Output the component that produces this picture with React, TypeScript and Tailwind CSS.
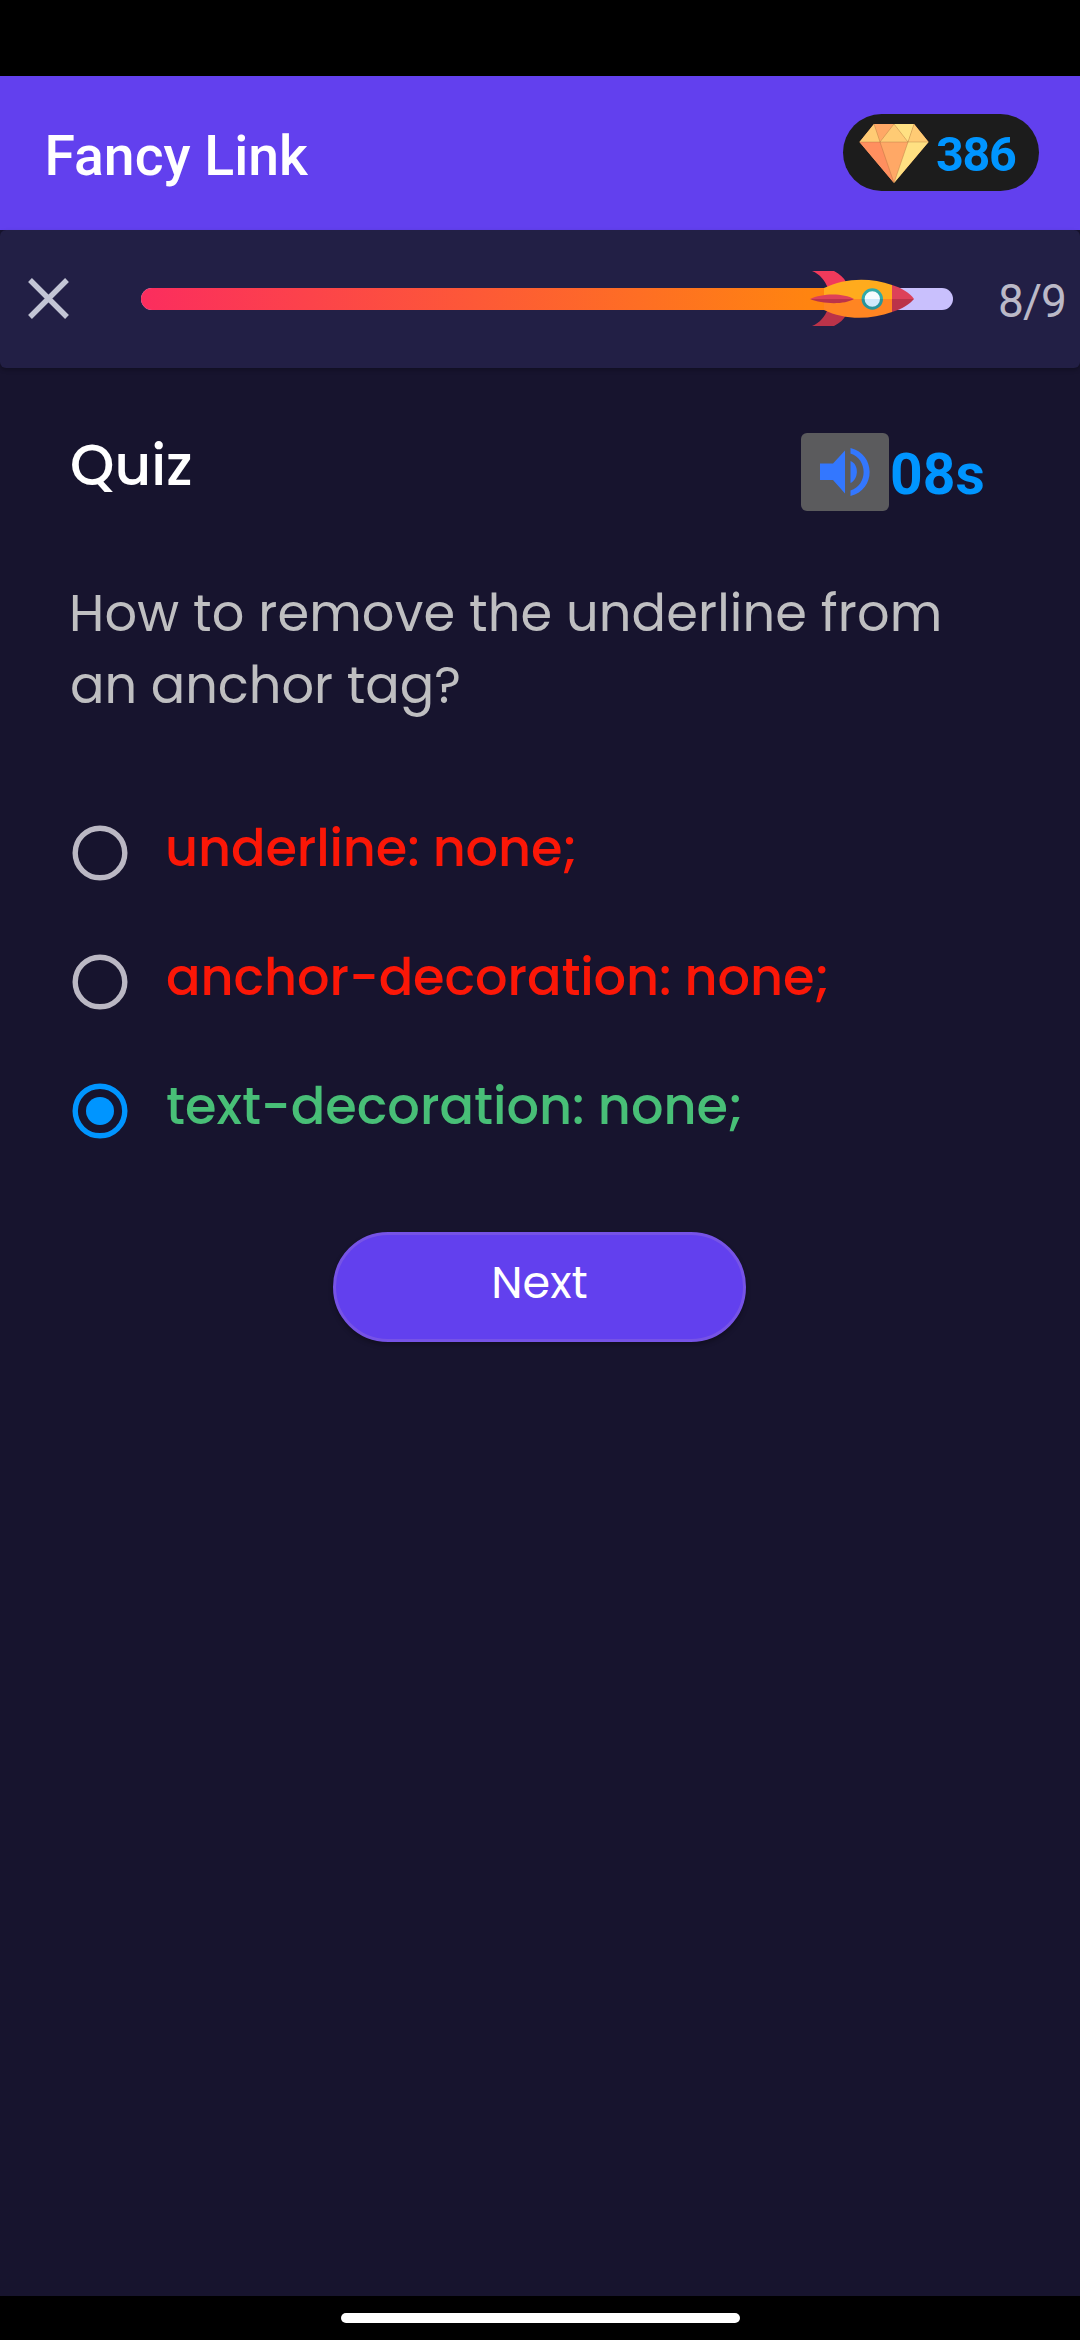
type Option = {
  label: string;
  selected: boolean;
  textClass: string;
};

const options: Option[] = [
  { label: "underline: none;", selected: false, textClass: "text-[#fb1707] tracking-[-0.13px]" },
  { label: "anchor-decoration: none;", selected: false, textClass: "ml-px text-[#fb1707] tracking-[-0.1px]" },
  { label: "text-decoration: none;", selected: true, textClass: "ml-px text-[#48bf77]" },
];

function Diamond() {
  return (
    <svg className="h-[60px] w-[70px]" viewBox="0 0 70 60" aria-hidden="true">
      <path d="M15 1H55L69.500 19L35 60L.5 19Z" fill="#ffa866" />
      <path d="M15 1L.5 19H21Z" fill="#ffcb74" />
      <path d="M35 1L21 19H49Z" fill="#ffcb74" />
      <path d="M35 1H55L49 19Z" fill="#ffe082" />
      <path d="M55 1L69.500 19H49Z" fill="#ffcb74" />
      <path d="M.5 19H21L35 60Z" fill="#ff8f5f" />
      <path d="M49 19H69.500L35 60Z" fill="#ffe082" />
      <path
        d="M.5 19H69.500M15 1L21 19L35 60L49 19L55 1M21 19L35 1L49 19"
        fill="none"
        stroke="#8a5a2c"
        strokeOpacity=".4"
        strokeWidth=".7"
      />
    </svg>
  );
}

function Rocket() {
  return (
    <svg className="h-[56px] w-[105px]" viewBox="0 0 105 56" aria-hidden="true">
      <path d="M2 0H24C30 3 34 7 36 11L18 17C15 10 10 3 2 0Z" fill="#f03a5b" />
      <path d="M2 55H24C30 52 34 48 36 44L18 38C15 45 10 52 2 55Z" fill="#bb3349" />
      <path d="M14 28V17C34 7 60 6 82 14V28Z" fill="#ffab1d" />
      <path d="M14 28V39C34 49 60 49 82 41V28Z" fill="#ff8522" />
      <path d="M82 14C92 17 100 22 104 28H82Z" fill="#dd4159" />
      <path d="M82 41C92 38 100 33 104 28H82Z" fill="#bb3349" />
      <path d="M0 28C12 22 34 22 44 28Z" fill="#dd4159" />
      <path d="M0 28C12 33 34 34 44 28Z" fill="#bb3349" />
      <circle cx="62.300" cy="27.800" r="9.200" fill="#f6fcff" />
      <path d="M53 28A9.300 9.300 0 0 0 71.600 28Z" fill="#cfe9fb" />
      <path d="M53.100 28A9.200 9.200 0 0 1 71.500 28" fill="none" stroke="#32aaa8" strokeWidth="3" />
      <path d="M53.100 28A9.200 9.200 0 0 0 71.500 28" fill="none" stroke="#27949b" strokeWidth="3" />
    </svg>
  );
}

function RadioMark({ selected }: { selected: boolean }) {
  return (
    <svg className="size-[56px] shrink-0" viewBox="0 0 56 56" aria-hidden="true">
      <circle cx="28" cy="28" r="24.800" fill="none" stroke={selected ? "#0095ff" : "#bbb8c4"} strokeWidth="5.400" />
      {selected && <circle cx="28" cy="28" r="14" fill="#0095ff" />}
    </svg>
  );
}

export default function App() {
  return (
    <div className="flex h-[2340px] w-[1080px] flex-col overflow-hidden bg-[#17142e] font-['Poppins','Inter',sans-serif]">
      <div className="h-[76px] shrink-0 bg-black" />

      <header className="flex h-[154px] shrink-0 items-center justify-between bg-[#6240ee] pr-[41px] pl-[44.500px] font-['Roboto',sans-serif]">
        <h1 className="pt-[7px] text-[55.300px] leading-[64px] font-medium text-white">Fancy Link</h1>
        <div className="mb-px flex h-[77px] w-[196px] items-center rounded-full bg-[#1c1c1c] pl-[15.500px]">
          <Diamond />
          <span className="pt-[5px] pl-[7.500px] text-[48.500px] leading-[56px] font-bold tracking-[-1.3px] text-[#0095ff]">
            386
          </span>
        </div>
      </header>

      <section className="flex h-[138px] shrink-0 items-center rounded-md bg-[#221f45] pl-[28px] shadow-[0_2px_4px_rgba(0,0,0,0.25)]">
        <svg className="mb-[2px] h-[41px] w-[41px]" viewBox="0 0 41 41" aria-hidden="true">
          <path d="M2 2L39 39M39 2L2 39" stroke="#c3c5d5" strokeWidth="5.400" />
        </svg>
        <div className="relative ml-[72px] h-[22px] w-[812px] rounded-full bg-[#c9c0fd]">
          <div className="h-full w-[725px] rounded-l-full bg-linear-to-r/srgb from-[#fb2d5e] to-[#ff8410] to-92%" />
          <div className="absolute top-[-17px] left-[669px]">
            <Rocket />
          </div>
        </div>
        <span className="ml-[45px] pt-[4px] font-['Roboto',sans-serif] text-[46px] leading-[54px] tracking-[-0.9px] text-[#bbb9c7]">
          8/9
        </span>
      </section>

      <main className="flex flex-1 flex-col px-[72px] pt-[65px]">
        <div className="flex h-[78px] items-center justify-between">
          <h2 className="-ml-[2px] pb-[12px] text-[56.500px] leading-[64px] font-medium text-white">Quiz</h2>
          <div className="mr-[24px] flex w-[183px] items-center">
            <div className="flex h-[78px] w-[88px] shrink-0 items-center justify-center rounded-md bg-[#5b5b5d]">
              <svg className="h-[50px] w-[52px]" viewBox="0 0 52 50" fill="#3377ff" aria-hidden="true">
                <path d="M1 16.500H14L26 3.500V46.500L14 33H1Z" />
                <path d="M31.500 14C40 17 40 32 31.500 36Z" />
                <path d="M31.500 1C57 7 57 43 31.500 49V43.500C49 38 49 12 31.500 6.500Z" />
              </svg>
            </div>
            <span className="pt-[5px] pl-px font-['Roboto',sans-serif] text-[57px] leading-[66px] font-bold text-[#0095ff]">
              08s
            </span>
          </div>
        </div>

        <p className="mt-[66px] -ml-[3px] flex flex-col items-start text-[51px] leading-[72px] whitespace-nowrap text-[#bfbfc1]">
          <span className="tracking-[0.15px]">How to remove the underline from</span>
          <span className="ml-px">an anchor tag?</span>
        </p>

        <div className="mt-[104px] flex flex-col gap-[73px]" role="radiogroup">
          {options.map((option) => (
            <div
              key={option.label}
              role="radio"
              aria-checked={option.selected}
              className="flex h-[56px] items-center gap-[37px]"
            >
              <RadioMark selected={option.selected} />
              <span className={`pb-[10px] text-[51px] leading-[60px] font-medium whitespace-nowrap ${option.textClass}`}>
                {option.label}
              </span>
            </div>
          ))}
        </div>

        <button
          type="button"
          className="mt-[93px] ml-[261px] flex h-[110px] w-[413px] items-center justify-center rounded-full border-3 border-[#7653e6] bg-[#6240ee] pb-[9px] text-[44.500px] leading-[50px] text-white shadow-[0_3px_5px_rgba(0,0,0,0.3)]"
        >
          Next
        </button>
      </main>

      <footer className="flex h-[44px] shrink-0 justify-center bg-black pt-[17px]">
        <div className="h-[10px] w-[399px] rounded-full bg-white" />
      </footer>
    </div>
  );
}
